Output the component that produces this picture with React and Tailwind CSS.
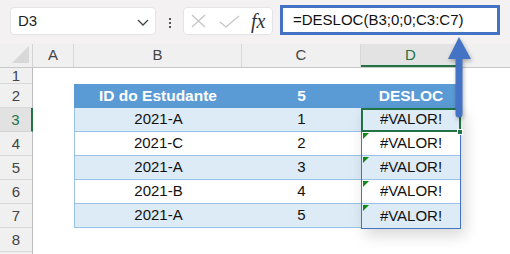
const FONT = { fontFamily: '"Liberation Sans", Arial, sans-serif' };

const ROWS = [
  { id: "2021-A", n: 1 },
  { id: "2021-C", n: 2 },
  { id: "2021-A", n: 3 },
  { id: "2021-B", n: 4 },
  { id: "2021-A", n: 5 },
];

function ErrorFlag() {
  return (
    <span className="absolute left-[1px] top-[1px] h-0 w-0 border-r-[6px] border-t-[6px] border-r-transparent border-t-[#108a10]" />
  );
}

function Toolbar() {
  return (
    <div className="flex h-[44px] items-start bg-[#f3f1f1] pt-[7px]">
      <div className="ml-[10px] flex h-[28px] w-[146px] items-center justify-between rounded-[4px] border border-[#e6e4e4] bg-white pl-[7px] pr-[6px] text-[15px] text-[#222]">
        <span>D3</span>
        <svg width="12" height="7" viewBox="0 0 12 7" className="mt-[2px]">
          <path d="M1 1l5 5 5-5" fill="none" stroke="#444" strokeWidth="1.3" />
        </svg>
      </div>
      <div className="flex w-[27px] flex-col items-center gap-[2px] pt-[11px]">
        <span className="h-[2px] w-[2px] bg-[#555]" />
        <span className="h-[2px] w-[2px] bg-[#555]" />
        <span className="h-[2px] w-[2px] bg-[#555]" />
      </div>
      <div className="flex h-[28px] w-[90px] items-center rounded-[4px] border border-[#e6e4e4] bg-white pl-[7px]">
        <svg width="15" height="14" viewBox="0 0 15 14">
          <path d="M1 1l13 12M14 1L1 13" stroke="#c6c6c6" strokeWidth="1.3" />
        </svg>
        <svg width="21" height="13" viewBox="0 0 21 13" className="ml-[13px]">
          <path d="M1 7l6 5L20 1" fill="none" stroke="#c6c6c6" strokeWidth="1.3" />
        </svg>
        <span
          className="ml-[11px] text-[20px] italic leading-none text-[#333]"
          style={{ fontFamily: '"Liberation Serif", "Times New Roman", serif' }}
        >
          fx
        </span>
      </div>
      <div className="ml-[7px] -mt-[2px] flex h-[30px] w-[220px] items-center border-[3px] border-[#4472c4] bg-white pl-[10px] text-[15px] text-[#111]">
        =DESLOC(B3;0;0;C3:C7)
      </div>
    </div>
  );
}

function ColumnHeaders() {
  const cols = [
    { l: "A", w: "w-[41px]" },
    { l: "B", w: "w-[168px]" },
    { l: "C", w: "w-[119px]" },
  ];
  return (
    <div className="flex h-[24px] border-b border-[#c8c8c8] bg-[#f0f0f0] text-[15px] text-[#444]">
      <div className="relative w-[33px] border-r border-[#d4d4d4]">
        <span className="absolute bottom-[4px] right-[3px] h-0 w-0 border-b-[17px] border-l-[17px] border-b-[#d8d8d8] border-l-transparent" />
      </div>
      {cols.map((c) => (
        <div key={c.l} className={`${c.w} flex items-center justify-center border-r border-[#d8d8d8]`}>
          {c.l}
        </div>
      ))}
      <div className="flex w-[100px] items-center justify-center border-b-2 border-r border-[#217346] border-r-[#d8d8d8] bg-[#e3e3e3] pt-[1px] text-[#217346]">
        D
      </div>
      <div className="flex-1" />
    </div>
  );
}

function RowHeaders() {
  const rows = [1, 2, 3, 4, 5, 6, 7, 8, 9];
  return (
    <div className="flex w-[33px] flex-col border-r border-[#bdbdbd] bg-[#f0f0f0] text-[15px] leading-none text-[#444]">
      {rows.map((r) => {
        const h = r === 1 ? "h-[16px]" : "h-[24px]";
        if (r === 3) {
          return (
            <div key={r} className={`${h} -mr-[1px] flex shrink-0 items-center justify-center border-b border-r-2 border-[#d4d4d4] border-r-[#217346] bg-[#e2e2e2] text-[#217346]`}>
              {r}
            </div>
          );
        }
        return (
          <div key={r} className={`${h} flex shrink-0 items-center justify-center border-b border-[#d9d9d9]`}>
            {r < 9 ? r : ""}
          </div>
        );
      })}
    </div>
  );
}

function Table() {
  return (
    <div className="flex">
      <div className="flex w-[287px] flex-col">
        <div className="flex h-[24px] bg-[#5b9bd5] text-[15.5px] font-bold text-white">
          <div className="flex w-[168px] items-center justify-center">ID do Estudante</div>
          <div className="flex w-[119px] items-center justify-center">5</div>
        </div>
        {ROWS.map((r, i) => (
          <div
            key={i}
            className={`flex h-[24px] border-b border-l border-[#9bc2e6] text-[15px] text-[#111] ${i % 2 === 0 ? "bg-[#ddebf7]" : "bg-white"}`}
          >
            <div className="flex w-[167px] items-center justify-center">{r.id}</div>
            <div className="flex w-[119px] items-center justify-center">{r.n}</div>
          </div>
        ))}
      </div>
      <div className="flex w-[100px] flex-col">
        <div className="flex h-[24px] items-center justify-center bg-[#5b9bd5] text-[15.5px] font-bold text-white">
          DESLOC
        </div>
        <div className="relative flex flex-col border-x border-b border-[#4472c4] shadow-[4px_6px_14px_rgba(0,0,0,0.16)]">
          {ROWS.map((r, i) => (
            <div
              key={i}
              className={`relative flex h-[24px] items-center justify-center text-[15px] text-[#111] ${i < 4 ? "border-b border-[#9bc2e6]" : "h-[23px]"} ${i % 2 === 0 ? "bg-[#ddebf7]" : "bg-white"}`}
            >
              {i > 0 && <ErrorFlag />}
              #VALOR!
            </div>
          ))}
          <div className="absolute -left-[1px] -right-[1px] top-0 h-[24px] border-2 border-[#217346]" />
          <span className="absolute -right-[3px] top-[21px] h-[6px] w-[6px] border border-white bg-[#217346]" />
        </div>
      </div>
    </div>
  );
}

function Arrow() {
  return (
    <svg
      className="absolute left-[444px] top-[35px] drop-shadow-[1px_2px_2px_rgba(0,0,0,0.3)]"
      width="30"
      height="86"
      viewBox="0 0 30 86"
    >
      <path d="M15 2L27 24H4Z" fill="#4472c4" />
      <path d="M11.5 22h7v57a3.5 3.5 0 0 1-7 0Z" fill="#4472c4" />
    </svg>
  );
}

export default function App() {
  return (
    <div className="relative h-[254px] w-[510px] overflow-hidden bg-white" style={FONT}>
      <Toolbar />
      <ColumnHeaders />
      <div className="flex">
        <RowHeaders />
        <div className="flex flex-col">
          <div className="h-[16px]" />
          <div className="ml-[41px]">
            <Table />
          </div>
        </div>
      </div>
      <Arrow />
    </div>
  );
}
